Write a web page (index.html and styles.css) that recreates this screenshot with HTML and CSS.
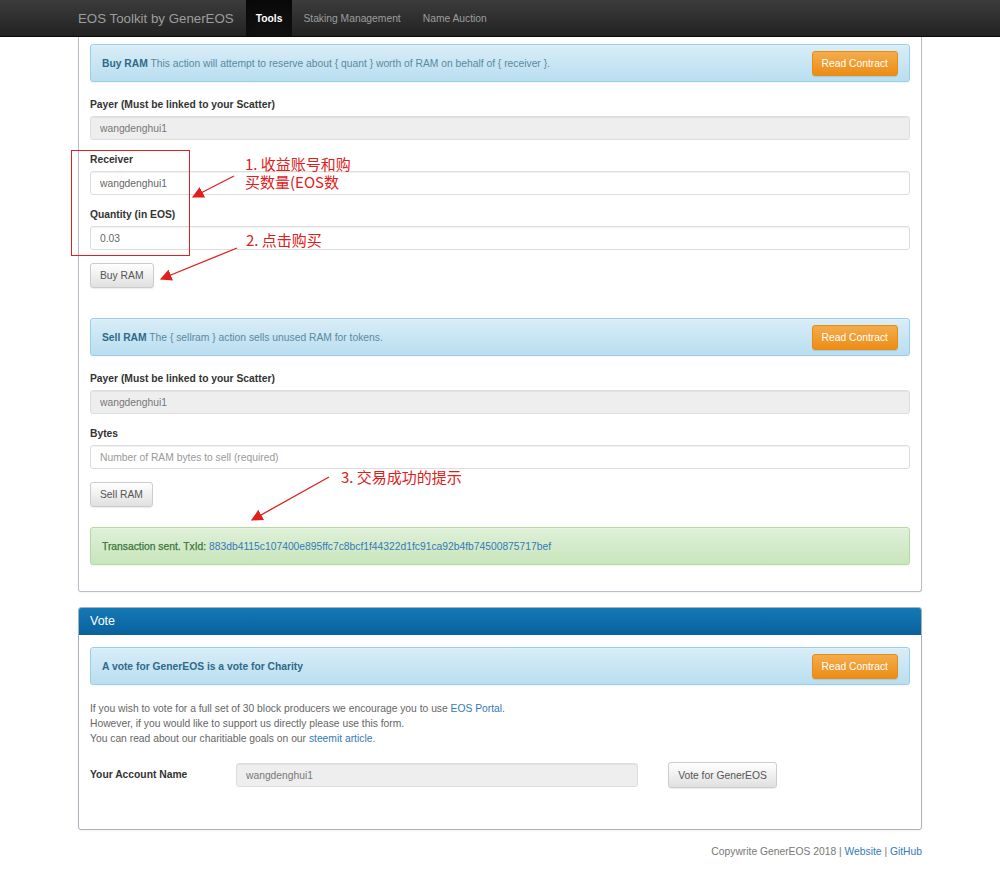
FILE: index.html
```html
<!DOCTYPE html>
<html lang="en">
<head>
    <meta charset="UTF-8">
    <title>EOS Toolkit by GenerEOS</title>
    <link rel="stylesheet" href="styles.css">
</head>
<body>
    <nav class="navbar">
        <div class="container nav-inner">
            <span class="brand">EOS Toolkit by GenerEOS</span>
            <a class="nav-link active" href="#">Tools</a>
            <a class="nav-link" href="#">Staking Management</a>
            <a class="nav-link" href="#">Name Auction</a>
        </div>
    </nav>

    <div class="container">
        <div class="panel panel-top">
            <div class="panel-body">
                <div class="alert alert-info">
                    <span><b>Buy RAM</b> This action will attempt to reserve about { quant } worth of RAM on behalf of { receiver }.</span>
                    <button class="btn btn-warning">Read Contract</button>
                </div>
                <div class="form-group first">
                    <label>Payer (Must be linked to your Scatter)</label>
                    <input class="form-control" value="wangdenghui1" disabled>
                </div>
                <div class="form-group">
                    <label>Receiver</label>
                    <input class="form-control" value="wangdenghui1">
                </div>
                <div class="form-group">
                    <label>Quantity (in EOS)</label>
                    <input class="form-control" value="0.03">
                </div>
                <div class="btn-row">
                    <button class="btn btn-default">Buy RAM</button>
                </div>

                <div class="alert alert-info spaced">
                    <span><b>Sell RAM</b> The { sellram } action sells unused RAM for tokens.</span>
                    <button class="btn btn-warning">Read Contract</button>
                </div>
                <div class="form-group first">
                    <label>Payer (Must be linked to your Scatter)</label>
                    <input class="form-control" value="wangdenghui1" disabled>
                </div>
                <div class="form-group">
                    <label>Bytes</label>
                    <input class="form-control" placeholder="Number of RAM bytes to sell (required)">
                </div>
                <div class="btn-row">
                    <button class="btn btn-default">Sell RAM</button>
                </div>

                <div class="alert alert-success">
                    <span><b class="semi">Transaction sent. TxId:</b> <a href="#">883db4115c107400e895ffc7c8bcf1f44322d1fc91ca92b4fb74500875717bef</a></span>
                </div>
            </div>
        </div>

        <div class="panel panel-primary">
            <div class="panel-heading">Vote</div>
            <div class="panel-body">
                <div class="alert alert-info">
                    <span><b class="semi">A vote for GenerEOS is a vote for Charity</b></span>
                    <button class="btn btn-warning">Read Contract</button>
                </div>
                <p class="vote-text">
                    If you wish to vote for a full set of 30 block producers we encourage you to use <a href="#">EOS Portal</a>.<br>
                    However, if you would like to support us directly please use this form.<br>
                    You can read about our charitiable goals on our <a href="#">steemit article</a>.
                </p>
                <div class="vote-row">
                    <label>Your Account Name</label>
                    <input class="form-control" value="wangdenghui1" disabled>
                    <button class="btn btn-default">Vote for GenerEOS</button>
                </div>
            </div>
        </div>

        <footer class="footer">
            Copywrite GenerEOS 2018 | <a href="#">Website</a> | <a href="#">GitHub</a>
        </footer>
    </div>

    <!-- annotations drawn over the screenshot -->
    <div class="note-box"></div>
    <div class="note note-1">1. 收益账号和购<br>买数量(EOS数</div>
    <div class="note note-2">2. 点击购买</div>
    <div class="note note-3">3. 交易成功的提示</div>
    <svg class="arrows" width="1000" height="889" viewBox="0 0 1000 889">
        <defs>
            <marker id="head" viewBox="0 0 10 10" refX="9" refY="5" markerWidth="9" markerHeight="9" orient="auto">
                <path d="M0 0 L10 5 L0 10 z" fill="#e0201c"/>
            </marker>
        </defs>
        <line x1="234" y1="176" x2="193" y2="197" stroke="#e0201c" stroke-width="1.3" marker-end="url(#head)"/>
        <line x1="237" y1="248" x2="161" y2="279" stroke="#e0201c" stroke-width="1.3" marker-end="url(#head)"/>
        <line x1="329" y1="477" x2="252" y2="520" stroke="#e0201c" stroke-width="1.3" marker-end="url(#head)"/>
    </svg>
</body>
</html>
```

FILE: styles.css
```css
body {
    font-family: "Liberation Sans", Arial, sans-serif;
    font-size: 10.3px;
    color: #333;
    background-color: #fff;
    margin: 0;
    padding: 0;
    position: relative;
    height: 889px;
    overflow: hidden;
}

a {
    color: #337ab7;
    text-decoration: none;
}

.container {
    width: 844px;
    margin: 0 auto;
}

/* navbar */
.navbar {
    height: 37px;
    background: linear-gradient(to bottom, #3c3c3c, #222);
    border-bottom: 1px solid #080808;
    box-sizing: border-box;
}

.nav-inner {
    display: flex;
    align-items: stretch;
    height: 36px;
}

.brand {
    font-size: 13.3px;
    color: #9d9d9d;
    line-height: 37px;
    padding-right: 12px;
}

.nav-link {
    color: #9d9d9d;
    line-height: 37px;
    padding: 0 11px;
}

.nav-link.active {
    color: #fff;
    font-weight: bold;
    padding: 0 10px;
    background: linear-gradient(to bottom, #0a0a0a, #111);
    box-shadow: inset 0 3px 8px rgba(0, 0, 0, 0.25);
}

/* panels */
.panel {
    border: 1px solid #b9bec6;
    border-radius: 3px;
    background-color: #fff;
    box-shadow: 0 1px 2px rgba(0, 0, 0, 0.05);
}

.panel-top {
    border-top: none;
    border-radius: 0 0 3px 3px;
}

.panel-top .panel-body {
    padding: 7px 11px 26px;
}

.panel-primary {
    margin-top: 15px;
    border-color: #a9b0b8;
}

.panel-heading {
    height: 27px;
    line-height: 27px;
    padding: 0 11px;
    color: #fff;
    font-size: 12.5px;
    background: linear-gradient(to bottom, #1379b6, #09619d);
    border-radius: 2px 2px 0 0;
}

.panel-primary .panel-body {
    padding: 12px 11px 41px;
}

/* alerts */
.alert {
    display: flex;
    justify-content: space-between;
    align-items: center;
    height: 38px;
    box-sizing: border-box;
    padding: 0 11px;
    border: 1px solid;
    border-radius: 3px;
    box-shadow: inset 0 1px 0 rgba(255, 255, 255, 0.25), 0 1px 2px rgba(0, 0, 0, 0.05);
}

.alert-info {
    color: #31708f;
    background: linear-gradient(to bottom, #d9edf7, #b9def0);
    border-color: #9acfea;
}

.alert-info span {
    color: #5a8aa0;
}

.alert-info b {
    color: #2f6a87;
}

.alert-success {
    color: #3c763d;
    background: linear-gradient(to bottom, #dff0d8, #c8e5bc);
    border-color: #b2dba1;
    margin-top: 20px;
}

.semi {
    font-weight: bold;
}

.alert-success .semi {
    font-weight: normal;
    -webkit-text-stroke: 0.25px #3c763d;
}

.alert.spaced {
    margin-top: 30px;
}

/* buttons */
.btn-row {
    display: flex;
}

.btn {
    font-family: inherit;
    font-size: 10.3px;
    height: 25px;
    padding: 0 9px;
    border: 1px solid;
    border-radius: 3px;
    cursor: pointer;
}

.btn-warning {
    color: #fff;
    background: linear-gradient(to bottom, #f4ac4c, #ec8d16);
    border-color: #e38d13;
    box-shadow: 0 1px 1px rgba(0, 0, 0, 0.1);
}

.btn-default {
    color: #555;
    background: linear-gradient(to bottom, #fff, #e0e0e0);
    border-color: #ccc;
    box-shadow: 0 1px 1px rgba(0, 0, 0, 0.08);
}

/* forms */
.form-group {
    display: flex;
    flex-direction: column;
    margin-bottom: 13px;
}

.form-group.first {
    margin-top: 16px;
}

.form-group label,
.vote-row label {
    font-weight: bold;
    line-height: 14px;
    margin-bottom: 4px;
}

.form-control {
    font-family: inherit;
    font-size: 10.3px;
    color: #666;
    height: 24px;
    box-sizing: border-box;
    padding: 0 9px;
    border: 1px solid #ddd;
    border-radius: 3px;
    background-color: #fff;
    box-shadow: inset 0 1px 1px rgba(0, 0, 0, 0.06);
}

.form-control::placeholder {
    color: #999;
}

.form-control:disabled {
    background-color: #eee;
    color: #777;
}

/* vote */
.vote-text {
    margin: 16px 0 0;
    line-height: 15px;
    color: #666;
}

.vote-row {
    display: flex;
    align-items: center;
    margin-top: 16px;
}

.vote-row label {
    width: 146px;
    margin: 0;
}

.vote-row .form-control {
    width: 402px;
}

.vote-row .btn {
    margin-left: 30px;
    width: 109px;
    height: 26px;
    padding: 0;
}

.footer {
    text-align: right;
    color: #777;
    margin-top: 16px;
}

/* annotations */
.note-box {
    position: absolute;
    left: 71px;
    top: 150px;
    width: 117px;
    height: 104px;
    border: 1px solid #e0201c;
}

.note {
    position: absolute;
    color: #e0201c;
    font-family: "Noto Sans CJK SC", sans-serif;
    font-size: 15px;
    line-height: 18px;
}

.note-1 {
    left: 245px;
    top: 155px;
}

.note-2 {
    left: 246px;
    top: 231px;
}

.note-3 {
    left: 341px;
    top: 468px;
}

.arrows {
    position: absolute;
    left: 0;
    top: 0;
    pointer-events: none;
}
```
